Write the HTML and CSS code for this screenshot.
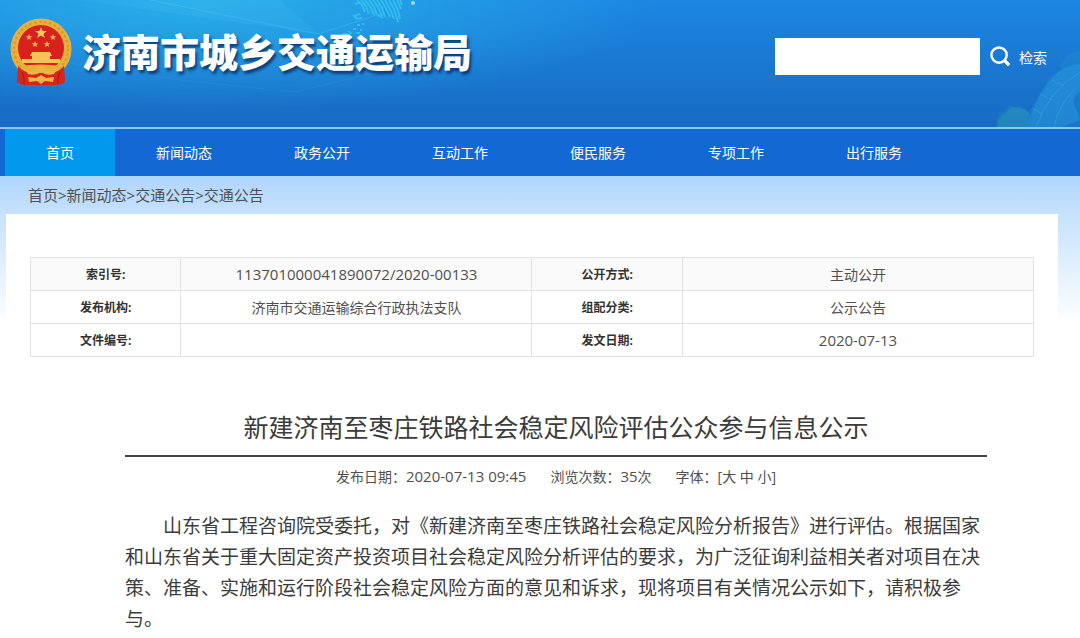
FILE: index.html
```
<!DOCTYPE html>
<html lang="zh-CN">
<head>
  <meta charset="UTF-8">
  <meta name="viewport" content="width=device-width, initial-scale=1.0">
  <title>济南市城乡交通运输局</title>
  <link rel="stylesheet" href="styles.css">
</head>
<body>

<header class="header">
  <svg class="header-map" viewBox="0 0 420 127" aria-hidden="true">
    <path d="M80 0L318 34L280 0Z" fill="#5cc8f4" opacity=".12"/>
    <path d="M0 52L180 80L294 92L420 62" fill="none" stroke="#5cc0ff" opacity=".12"/>
    <path d="M150 0L318 34L380 14" fill="none" stroke="#8fdcff" opacity=".2"/>
    <g fill="none" stroke="#38c8f2" stroke-width="2" opacity=".75">
      <path d="M357 0l5 5l3 7M361 0l5 6l3 8M365 0l5 6l4 9M369 0l5 7l3 8M373 0l5 7l4 9M377 0l5 8l3 9M381 0l5 8l4 9M385 0l5 9l4 10M389 0l5 9l4 13M393 0l5 10l2 9M397 0l4 9M400 0l2 5"/>
      <path d="M360 14l-6 2l3 3l5-1M359 3l-4 1M378 15l5 3M343 34h5M348 31l4 3M356 33h4M357 25h3M362 24h2M353 29h3M360 30h2"/>
    </g>
    <circle cx="413" cy="3" r="2" fill="#9adcff"/>
  </svg>
  <svg class="header-road" viewBox="0 0 120 127" aria-hidden="true">
    <path d="M36 127q-2-12 8-16q4-8 12-4q8-2 12 6l12-20q8-18 22-22q-4-8 4-14q4-4 14-6v76z" fill="#27a0c8" opacity=".18"/>
    <path d="M38 127q-2-10 8-14q4-8 14-5q10 2 10 8l-4 11z" fill="#35b0b4" opacity=".3"/>
    <path d="M66 127Q80 88 98 72Q106 66 120 64V92Q108 98 118 112L120 120L102 127Z" fill="#2ba0e8" opacity=".4"/>
    <path d="M76 127Q88 92 120 72M94 127Q98 106 114 90M72 108l10 6M80 94l12 6M92 80l12 6" fill="none" stroke="#66c0ee" opacity=".25"/>
  </svg>

  <a class="brand" href="#">
    <svg class="emblem" viewBox="0 0 62 68" aria-hidden="true">
      <path d="M9 46L7 64Q14 68 20 65H42Q49 68 55 64L53 46Z" fill="#d92a1c"/>
      <circle cx="31" cy="31" r="30.5" fill="#e9ae3c"/>
      <circle cx="31" cy="31" r="27" fill="none" stroke="#d8932a" stroke-width="2" stroke-dasharray="2 3"/>
      <circle cx="31" cy="30" r="23" fill="#d8201c"/>
      <path d="M31 9l1.600 4h4.400l-3.500 2.800 1.300 4.200-3.800-2.500-3.800 2.500 1.300-4.200-3.500-2.800h4.400z" fill="#f8c860"/>
      <g fill="#f3b650">
        <path id="star" d="M19 16l.9 2.200h2.400l-1.900 1.500.7 2.400-2.100-1.400-2.100 1.400.7-2.400-1.900-1.500h2.400z"/>
        <use href="#star" x="24"/>
        <use href="#star" x="6" y="7"/>
        <use href="#star" x="18" y="7"/>
      </g>
      <path d="M22 34h18l2 4h-2v3h10v4H12v-4h10v-3h-2z" fill="#f4c25a"/>
      <path d="M10 48Q30 45 52 48L47 54Q31 60 15 54Z" fill="#e9ae3c"/>
      <path d="M8 48Q14 55 22 55H40Q48 55 54 48L55 64Q51 67 45 67H17Q11 67 7 64Z" fill="#d8241c"/>
      <path d="M12 54Q15 60 14 66M50 54Q47 60 48 66" fill="none" stroke="#a91812"/>
      <path d="M14 50Q20 55 24 52Q31 46 38 52Q42 55 48 50L44 56Q36 58 31 54Q26 58 18 56Z" fill="#efb443"/>
      <path d="M18 59L26 60L31 57L36 60L44 59L43 64L35 63L31 66L27 63L19 64Z" fill="#efb443"/>
    </svg>
    <span class="brand-name">济南市城乡交通运输局</span>
  </a>

  <form class="search">
    <input class="search-input" type="text" aria-label="检索内容">
    <button class="search-btn" type="submit">
      <svg class="search-icon" viewBox="0 0 22 22" aria-hidden="true">
        <circle cx="9.500" cy="9.500" r="8" fill="none" stroke="#fff" stroke-width="2.500"/>
        <path d="M15.500 15.500L20 20" stroke="#fff" stroke-width="3.500"/>
      </svg>
      检索
    </button>
  </form>
</header>

<nav class="nav">
  <a class="active" href="#">首页</a>
  <a href="#">新闻动态</a>
  <a href="#">政务公开</a>
  <a href="#">互动工作</a>
  <a href="#">便民服务</a>
  <a href="#">专项工作</a>
  <a href="#">出行服务</a>
</nav>

<div class="page">
  <div class="crumbs">
    <a href="#">首页</a>&gt;<a href="#">新闻动态</a>&gt;<a href="#">交通公告</a>&gt;<a href="#">交通公告</a>
  </div>

  <main class="content">
    <table class="info">
      <tr>
        <th scope="row">索引号:</th>
        <td class="num">113701000041890072/2020-00133</td>
        <th scope="row">公开方式:</th>
        <td>主动公开</td>
      </tr>
      <tr>
        <th scope="row">发布机构:</th>
        <td>济南市交通运输综合行政执法支队</td>
        <th scope="row">组配分类:</th>
        <td>公示公告</td>
      </tr>
      <tr>
        <th scope="row">文件编号:</th>
        <td></td>
        <th scope="row">发文日期:</th>
        <td class="num">2020-07-13</td>
      </tr>
    </table>

    <article class="article">
      <h1>新建济南至枣庄铁路社会稳定风险评估公众参与信息公示</h1>
      <div class="meta">
        <span>发布日期：<span class="num">2020-07-13 09:45</span></span>
        <span>浏览次数：<span class="num">35</span>次</span>
        <span>字体：[<a href="#">大</a> <a href="#">中</a> <a href="#">小</a>]</span>
      </div>
      <p>山东省工程咨询院受委托，对《新建济南至枣庄铁路社会稳定风险分析报告》进行评估。根据国家和山东省关于重大固定资产投资项目社会稳定风险分析评估的要求，为广泛征询利益相关者对项目在决策、准备、实施和运行阶段社会稳定风险方面的意见和诉求，现将项目有关情况公示如下，请积极参与。</p>
    </article>
  </main>
</div>

</body>
</html>
```
FILE: styles.css
```
* {
  box-sizing: border-box;
}

body {
  margin: 0;
  font-family: "Open Sans", "Noto Sans CJK SC", sans-serif;
  font-size: 14px;
  color: #505050;
  background: #fff;
}

a {
  color: inherit;
  text-decoration: none;
}

/* header */
.header {
  position: relative;
  display: flex;
  justify-content: space-between;
  align-items: flex-start;
  height: 129px;
  padding: 18px 33px 0 10px;
  overflow: hidden;
  border-bottom: 2px solid #84c8f4;
  background:
    radial-gradient(ellipse 460px 110px at 200px 0, rgba(44, 186, 236, 0.8), rgba(44, 186, 236, 0)),
    linear-gradient(#1c86e2, #186bc2);
}

.header-map,
.header-road {
  position: absolute;
  top: 0;
  height: 127px;
}

.header-map {
  left: 0;
}

.header-road {
  right: 0;
}

.brand {
  position: relative;
  display: flex;
  align-items: center;
  gap: 10px;
}

.emblem {
  width: 62px;
  height: 68px;
}

.brand-name {
  font-size: 39px;
  font-weight: 900;
  line-height: 68px;
  color: #fff;
  text-shadow: 2px 3px 3px rgba(0, 30, 80, 0.7);
}

.search {
  position: relative;
  display: flex;
  align-items: center;
  margin-top: 20px;
}

.search-input {
  width: 205px;
  height: 37px;
  padding: 0 8px;
  border: 0;
  background: #fff;
  font: inherit;
}

.search-btn {
  display: flex;
  align-items: center;
  gap: 8px;
  padding: 0 0 0 10px;
  border: 0;
  background: none;
  color: #fff;
  font: inherit;
  cursor: pointer;
}

.search-icon {
  width: 21px;
  height: 21px;
}

/* navigation */
.nav {
  display: flex;
  padding-left: 5px;
  background: #1368d4;
}

.nav a {
  padding: 0 41px;
  line-height: 47px;
  color: #fff;
}

.nav a.active,
.nav a:hover {
  background: #0099ee;
}

/* page */
.page {
  padding: 0 22px 0 6px;
  background: linear-gradient(#afd5fd, #c6e2fc 38px, #fff 148px);
}

.crumbs {
  padding-left: 22px;
  font-size: 15px;
  line-height: 38px;
}

.content {
  padding: 43px 24px 0;
  background: #fff;
}

.info {
  width: 100%;
  table-layout: fixed;
  border-collapse: collapse;
  text-align: center;
}

.info th,
.info td {
  height: 33px;
  padding: 0 0 1px;
  border: 1px solid #e2e2e2;
}

.info th {
  width: 15%;
  font-size: 12px;
  color: #333;
}

.info td {
  width: 35%;
}

.info tr:first-child {
  background: #fafafa;
}

.num {
  font-size: 15px;
}

/* article */
.article {
  padding: 50px 47px 0 95px;
  color: #3c3c3c;
}

.article h1 {
  margin: 0;
  padding-bottom: 8px;
  border-bottom: 2px solid #444;
  font-size: 25px;
  font-weight: 400;
  line-height: 40px;
  text-align: center;
}

.meta {
  display: flex;
  justify-content: center;
  align-items: baseline;
  gap: 24px;
  line-height: 38px;
  color: #505050;
}

.article p {
  margin: 15px 0 0;
  font-size: 19px;
  line-height: 31px;
  text-indent: 2em;
}
```
